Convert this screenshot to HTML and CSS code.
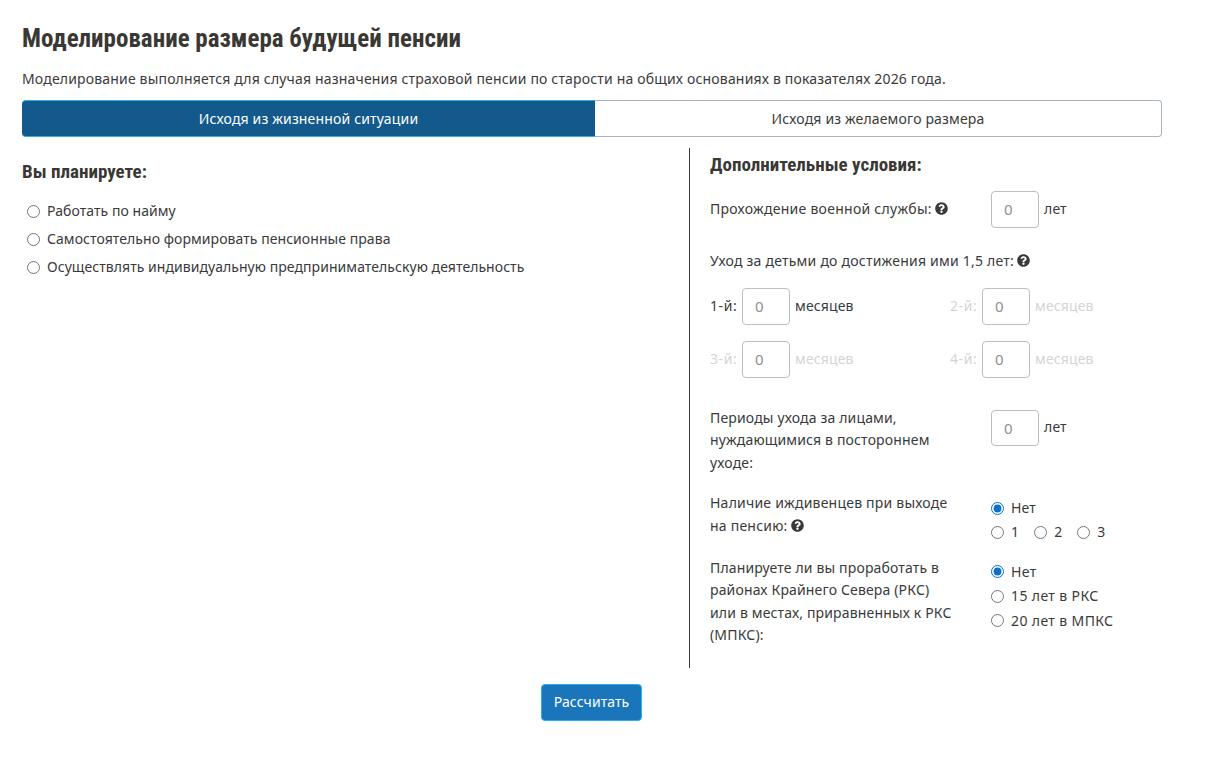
FILE: index.html
```html
<!DOCTYPE html>
<html lang="ru">
<head>
<meta charset="utf-8">
<title>Моделирование размера будущей пенсии</title>
<link rel="stylesheet" href="styles.css">
</head>
<body>
<main class="page">
  <h1 class="title">Моделирование размера будущей пенсии</h1>
  <p class="lead">Моделирование выполняется для случая назначения страховой пенсии по старости на общих основаниях в показателях 2026 года.</p>
  <div class="tabs">
    <div class="tab tab-active">Исходя из жизненной ситуации</div>
    <div class="tab">Исходя из желаемого размера</div>
  </div>
  <div class="columns">
    <section class="col-left">
      <h2 class="subtitle">Вы планируете:</h2>
      <div class="plan-list">
        <label class="radio-line"><input type="radio" name="plan"><span>Работать по найму</span></label>
        <label class="radio-line"><input type="radio" name="plan"><span>Самостоятельно формировать пенсионные права</span></label>
        <label class="radio-line"><input type="radio" name="plan"><span>Осуществлять индивидуальную предпринимательскую деятельность</span></label>
      </div>
    </section>
    <section class="col-right">
      <h2 class="subtitle subtitle-right">Дополнительные условия:</h2>
      <div class="row row-army">
        <div class="row-label">Прохождение военной службы:<svg class="help" viewBox="0 0 512 512"><path d="M504 256c0 137-111 248-248 248S8 393 8 256 119 8 256 8s248 111 248 248zM262.700 90c-54.500 0-89.300 23-116.600 63.800-3.500 5.300-2.400 12.400 2.700 16.300l34.700 26.300c5.200 3.900 12.600 3 16.700-2.100 17.900-22.700 30.100-35.800 57.300-35.800 20.400 0 45.700 13.100 45.700 33 0 15-12.400 22.700-32.600 34-23.600 13.200-54.800 29.700-54.800 70.900V302c0 6.600 5.400 12 12 12h56c6.600 0 12-5.400 12-12v-1.300c0-28.600 83.500-29.800 83.500-107.200C380 135.300 319.500 90 262.700 90zM256 339c-25.500 0-46.200 20.700-46.200 46.200 0 25.500 20.700 46.200 46.200 46.200s46.200-20.700 46.200-46.200c0-25.500-20.700-46.200-46.200-46.200z"/></svg></div>
        <div class="row-control"><span class="num">0</span><span class="unit">лет</span></div>
      </div>
      <div class="row-label row-children">Уход за детьми до достижения ими 1,5 лет:<svg class="help" viewBox="0 0 512 512"><path d="M504 256c0 137-111 248-248 248S8 393 8 256 119 8 256 8s248 111 248 248zM262.700 90c-54.500 0-89.300 23-116.600 63.800-3.500 5.300-2.400 12.400 2.700 16.300l34.700 26.300c5.200 3.900 12.600 3 16.700-2.100 17.900-22.700 30.100-35.800 57.300-35.800 20.400 0 45.700 13.100 45.700 33 0 15-12.400 22.700-32.600 34-23.600 13.200-54.800 29.700-54.800 70.900V302c0 6.600 5.400 12 12 12h56c6.600 0 12-5.400 12-12v-1.300c0-28.600 83.500-29.800 83.500-107.200C380 135.300 319.500 90 262.700 90zM256 339c-25.500 0-46.200 20.700-46.200 46.200 0 25.500 20.700 46.200 46.200 46.200s46.200-20.700 46.200-46.200c0-25.500-20.700-46.200-46.200-46.200z"/></svg></div>
      <div class="kids">
        <div class="kid"><span class="kid-name">1-й:</span><span class="num">0</span><span class="unit">месяцев</span></div>
        <div class="kid kid-off"><span class="kid-name">2-й:</span><span class="num">0</span><span class="unit">месяцев</span></div>
        <div class="kid kid-off"><span class="kid-name">3-й:</span><span class="num">0</span><span class="unit">месяцев</span></div>
        <div class="kid kid-off"><span class="kid-name">4-й:</span><span class="num">0</span><span class="unit">месяцев</span></div>
      </div>
      <div class="row row-care">
        <div class="row-label">Периоды ухода за лицами, нуждающимися в постороннем уходе:</div>
        <div class="row-control"><span class="num num-short">0</span><span class="unit">лет</span></div>
      </div>
      <div class="row row-deps">
        <div class="row-label">Наличие иждивенцев при выходе на пенсию:<svg class="help" viewBox="0 0 512 512"><path d="M504 256c0 137-111 248-248 248S8 393 8 256 119 8 256 8s248 111 248 248zM262.700 90c-54.500 0-89.300 23-116.600 63.800-3.500 5.300-2.400 12.400 2.700 16.300l34.700 26.300c5.200 3.900 12.600 3 16.700-2.100 17.900-22.700 30.100-35.800 57.300-35.800 20.400 0 45.700 13.100 45.700 33 0 15-12.400 22.700-32.600 34-23.600 13.200-54.800 29.700-54.800 70.900V302c0 6.600 5.400 12 12 12h56c6.600 0 12-5.400 12-12v-1.300c0-28.600 83.500-29.800 83.500-107.200C380 135.300 319.500 90 262.700 90zM256 339c-25.500 0-46.200 20.700-46.200 46.200 0 25.500 20.700 46.200 46.200 46.200s46.200-20.700 46.200-46.200c0-25.500-20.700-46.200-46.200-46.200z"/></svg></div>
        <div class="radio-stack">
          <label class="radio-line"><input type="radio" name="deps" checked><span>Нет</span></label>
          <div class="radio-inline">
            <label class="radio-line"><input type="radio" name="deps"><span>1</span></label>
            <label class="radio-line"><input type="radio" name="deps"><span>2</span></label>
            <label class="radio-line"><input type="radio" name="deps"><span>3</span></label>
          </div>
        </div>
      </div>
      <div class="row row-north">
        <div class="row-label">Планируете ли вы проработать в районах Крайнего Севера (РКС) или в местах, приравненных к РКС (МПКС):</div>
        <div class="radio-stack">
          <label class="radio-line"><input type="radio" name="north" checked><span>Нет</span></label>
          <label class="radio-line"><input type="radio" name="north"><span>15 лет в РКС</span></label>
          <label class="radio-line"><input type="radio" name="north"><span>20 лет в МПКС</span></label>
        </div>
      </div>
    </section>
  </div>
  <div class="actions"><button class="submit" type="button">Рассчитать</button></div>
</main>
</body>
</html>
```
FILE: styles.css
```css
* { box-sizing: border-box; }
html, body { margin: 0; background: #fff; }
body {
  font-family: "Noto Sans", "Open Sans", sans-serif;
  font-size: 14px;
  line-height: 22.5px;
  letter-spacing: 0.16px;
  color: #3a3a3a;
  height: 759px;
  overflow: hidden;
}
.page { width: 1140px; margin-left: 22px; padding-top: 24px; }
.title {
  margin: 0;
  font-family: Roboto, sans-serif;
  font-stretch: 75%;
  font-size: 25px;
  line-height: 29px;
  font-weight: 700;
  letter-spacing: 0;
  color: #3a3835;
}
.lead { margin: 15px 0 0; height: 32px; letter-spacing: 0.175px; }
.tabs {
  display: grid;
  grid-template-columns: 573px 1fr;
  height: 37px;
  border-radius: 4px;
  text-align: center;
}
.tab {
  line-height: 35px;
  border: 1px solid #a9b4c2;
  border-left: 0;
  border-radius: 0 4px 4px 0;
}
.tab-active {
  background: #14598c;
  color: #fff;
  border: 1px solid #2ab0e8;
  border-width: 1px 0;
  border-radius: 4px 0 0 4px;
}
.columns { display: grid; grid-template-columns: 667px 1fr; margin-top: 11px; }
.subtitle {
  margin: 0;
  font-family: Roboto, sans-serif;
  font-stretch: 75%;
  font-size: 19px;
  line-height: 22px;
  font-weight: 700;
  letter-spacing: 0;
  color: #3a3835;
}
.col-left .subtitle { margin-top: 13px; }
.plan-list {
  display: flex;
  flex-direction: column;
  gap: 5.500px;
  margin-top: 17px;
  padding-left: 5px;
  letter-spacing: 0.06px;
}
.col-right {
  border-left: 1px solid #3a3a3a;
  padding: 6px 0 0 20px;
  height: 520px;
}
.radio-line { display: flex; align-items: center; }
input[type="radio"] { width: 13px; height: 13px; margin: 0 7px 0 0; flex: none; accent-color: #0b6fd0; }
.row { display: grid; grid-template-columns: 281px 1fr; }
.row-label { padding-right: 35px; }
.help { width: 13px; height: 13px; fill: #3a3a3a; margin-left: 3px; vertical-align: -1px; }
.row-control { display: flex; align-items: center; gap: 5px; }
.num {
  display: block;
  width: 48px;
  height: 37px;
  border: 1px solid #b9bec6;
  border-radius: 4px;
  padding-left: 12px;
  font-size: 15px;
  line-height: 35px;
  color: #8f8f8f;
}
.num-short { height: 36px; line-height: 34px; }
.row-army { margin-top: 15px; }
.row-army .row-label { padding-top: 7px; letter-spacing: 0.27px; }
.row-children { margin-top: 22px; padding: 0; letter-spacing: 0.23px; }
.kids { display: grid; grid-template-columns: 240px 1fr; row-gap: 16px; margin-top: 15px; }
.kid { display: flex; align-items: center; gap: 5px; }
.kid-name { flex: none; width: 27px; white-space: nowrap; letter-spacing: 0.6px; }
.kid-off { color: #d4d4d4; }
.kid-off .num { color: #8f8f8f; }
.row-care { margin-top: 32px; }
.row-care .row-label { margin-top: -3px; }
.row-care .row-control { align-self: start; }
.row-deps { margin-top: 18px; }
.row-deps .row-label { letter-spacing: 0.22px; }
.row-deps .radio-stack { padding-top: 5px; gap: 1.500px; }
.radio-stack { display: flex; flex-direction: column; }
.radio-inline { display: flex; gap: 15px; }
.row-north { margin-top: 18px; }
.row-north .row-label { margin-top: -5px; }
.row-north .radio-stack { gap: 2px; margin-top: -1px; letter-spacing: 0.38px; }
.actions { display: flex; justify-content: center; width: 1139px; margin-top: 16px; }
.submit {
  width: 101px;
  height: 37px;
  background: #1b75bb;
  border: 1px solid #2ab0e8;
  border-radius: 4px;
  color: #fff;
  font: inherit;
  letter-spacing: 0.05px;
}
```
